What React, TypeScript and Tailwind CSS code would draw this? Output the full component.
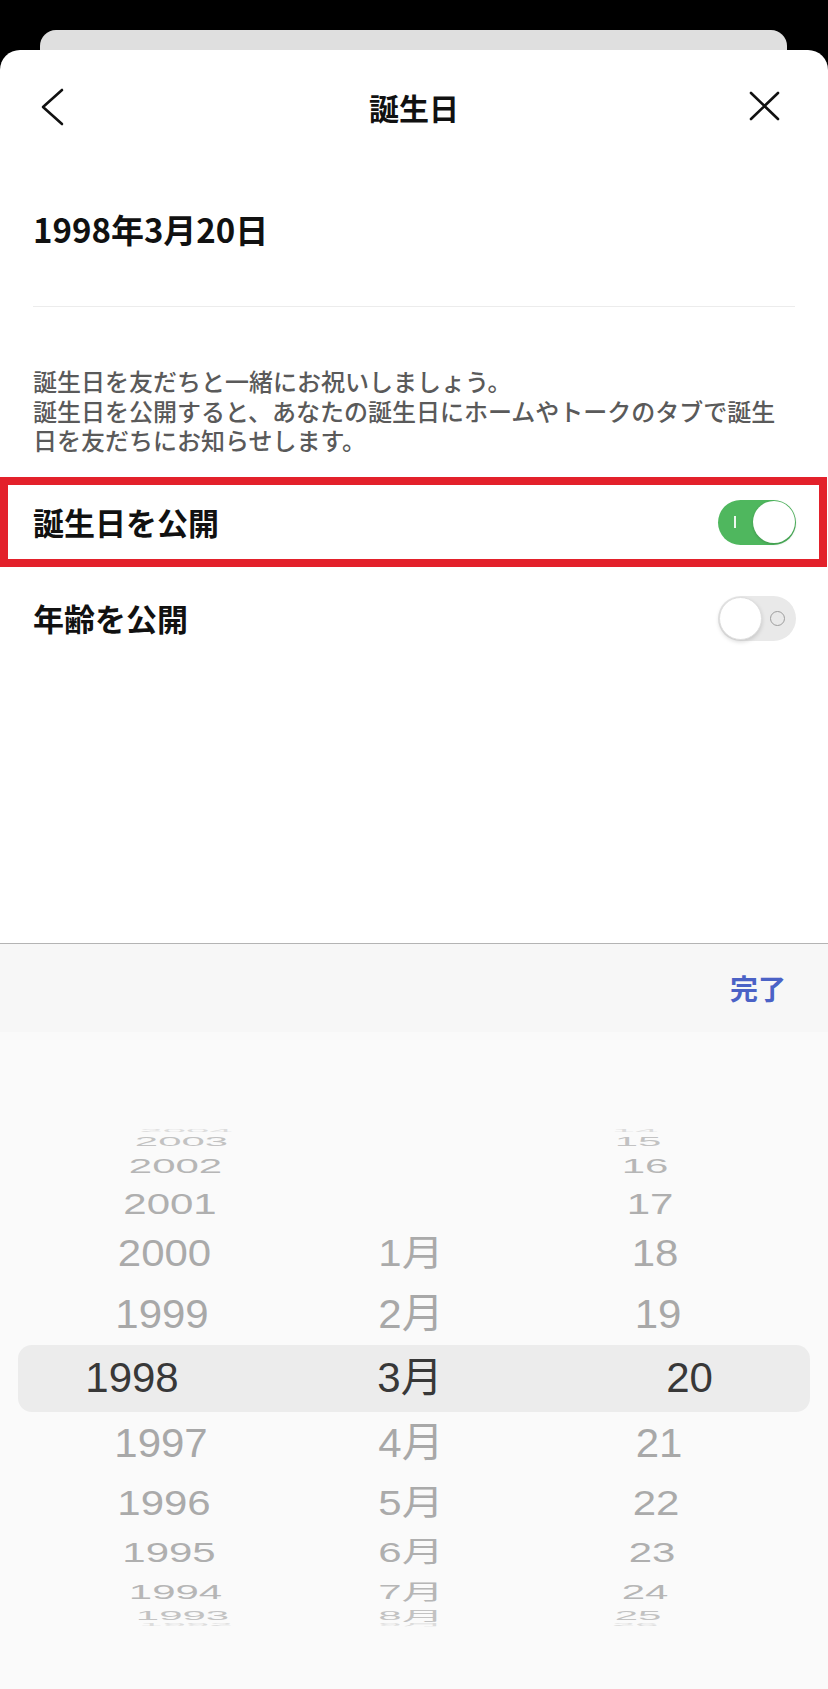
import React from "react";

const jp = "font-['Noto_Sans_CJK_JP',sans-serif]";
const pickerFont = "font-['Liberation_Sans','Noto_Sans_CJK_JP',sans-serif]";

// wheel rows, k = -6..6 (0 is the selected one)
const rows = [
    {k: -6, h: 5, s: 0.08, c: "#dcdcdc", yx: 48, dx: -55},
    {k: -5, h: 16, s: 0.3, c: "#c2c2c2", yx: 43.5, dx: -52},
    {k: -4, h: 32, s: 0.5, c: "#b6b6b6", yx: 37.5, dx: -45},
    {k: -3, h: 44, s: 0.7, c: "#afafaf", yx: 32, dx: -40},
    {k: -2, h: 57, s: 0.87, c: "#aaaaaa", yx: 26.5, dx: -35},
    {k: -1, h: 62, s: 0.97, c: "#a8a8a8", yx: 24, dx: -32},
    {k: 0, h: 67, s: 1, c: "#383838", yx: -15, dx: 8.5},
    {k: 1, h: 62, s: 0.97, c: "#a8a8a8", yx: 23, dx: -31},
    {k: 2, h: 58, s: 0.84, c: "#aaaaaa", yx: 26, dx: -34},
    {k: 3, h: 43, s: 0.67, c: "#afafaf", yx: 31, dx: -38},
    {k: 4, h: 34, s: 0.5, c: "#b6b6b6", yx: 37.5, dx: -45},
    {k: 5, h: 14, s: 0.3, c: "#c2c2c2", yx: 44.5, dx: -52},
    {k: 6, h: 4, s: 0.08, c: "#dcdcdc", yx: 48, dx: -55},
];

function Label({text, dx, s, c}: {text: string; dx: number; s: number; c: string}) {
    return (
        <span
            className="block whitespace-nowrap text-[42px] leading-none"
            style={{transform: `translateX(${dx}px) scaleY(${s})`, color: c}}
        >
            {text}
        </span>
    );
}

function Wheel() {
    return (
        <div className={`h-[657px] bg-[#fafafa] pt-[96.5px] overflow-hidden ${pickerFont}`}>
            {rows.map((r) => {
                const year = String(1998 - r.k);
                const month = r.k >= -2 ? `${3 + r.k}月` : "";
                const day = String(20 + r.k);
                if (r.k === 0) {
                    return (
                        <div key={r.k} className="mx-[18px] flex rounded-[14px] bg-[#ececec]" style={{height: r.h}}>
                            <div className="flex w-[258px] items-center justify-center">
                                <Label text={year} dx={r.yx} s={1} c={r.c}/>
                            </div>
                            <div className="flex w-[276px] items-center justify-center">
                                <Label text={month} dx={-4} s={1} c={r.c}/>
                            </div>
                            <div className="flex w-[258px] items-center justify-center">
                                <Label text={day} dx={r.dx} s={1} c={r.c}/>
                            </div>
                        </div>
                    );
                }
                return (
                    <div key={r.k} className="flex" style={{height: r.h}}>
                        <div className="flex w-[276px] items-center justify-center">
                            <Label text={year} dx={r.yx} s={r.s} c={r.c}/>
                        </div>
                        <div className="flex w-[276px] items-center justify-center">
                            <Label text={month} dx={-3} s={r.s} c={r.c}/>
                        </div>
                        <div className="flex w-[276px] items-center justify-center">
                            <Label text={day} dx={r.dx} s={r.s} c={r.c}/>
                        </div>
                    </div>
                );
            })}
        </div>
    );
}

function SwitchOn() {
    return (
        <div className="flex h-[45px] w-[78px] items-center justify-between rounded-full bg-[#4fb75e] pl-[16px] pr-[1.5px]">
            <span className="h-[12px] w-[1.5px] bg-white/90"/>
            <span className="h-[42px] w-[42px] rounded-full bg-white shadow-[0_1px_3px_rgba(0,0,0,0.2)]"/>
        </div>
    );
}

function SwitchOff() {
    return (
        <div className="flex h-[45px] w-[78px] items-center rounded-full bg-[#e9e9e9] pl-[1px]">
            <span className="h-[43px] w-[43px] rounded-full border border-[#dedede] bg-white shadow-[0_2px_4px_rgba(0,0,0,0.15)]"/>
            <span className="ml-[8px] h-[15px] w-[15px] rounded-full border-[1.5px] border-[#9d9d9d]"/>
        </div>
    );
}

export default function App() {
    return (
        <div className={`flex h-[1689px] w-[828px] flex-col overflow-hidden bg-black ${jp}`}>
            <div className="h-[30px]"/>
            <div className="mx-[40px] h-[20px] w-[747px] rounded-t-[16px] bg-[#dfdfdf]"/>
            <div className="flex flex-1 flex-col rounded-t-[20px] bg-white">
                {/* header */}
                <div className="grid h-[114px] grid-cols-[1fr_auto_1fr] items-center">
                    <div className="pl-[40px]">
                        <svg width="26" height="40" viewBox="0 0 26 40" fill="none">
                            <polyline points="22,3 3,20 22,37" stroke="#111" strokeWidth="2.6" strokeLinecap="round" strokeLinejoin="round"/>
                        </svg>
                    </div>
                    <h1 className="text-[30px] font-bold text-[#111]">誕生日</h1>
                    <div className="flex justify-end pr-[44px]">
                        <svg width="40" height="40" viewBox="0 0 40 40" fill="none">
                            <path d="M7 6 L34 32 M34 6 L7 32" stroke="#111" strokeWidth="2.6" strokeLinecap="round"/>
                        </svg>
                    </div>
                </div>

                {/* value */}
                <div className="mx-[33px] h-[143px] border-b-[1.5px] border-[#ececec] pt-[45px]">
                    <p className="text-[33px] font-semibold leading-[40px] text-[#111]">1998年3月20日</p>
                </div>

                <p className="px-[33px] pb-[19.5px] pt-[59px] text-[24px] font-medium leading-[29.5px] text-[#5a5a5a]">
                    誕生日を友だちと一緒にお祝いしましょう。<br/>
                    誕生日を公開すると、あなたの誕生日にホームやトークのタブで誕生<br/>
                    日を友だちにお知らせします。
                </p>

                <div className="relative flex h-[96px] items-center justify-between pl-[33px] pr-[32px]">
                    <span className="text-[31px] font-bold text-[#111]">誕生日を公開</span>
                    <SwitchOn/>
                    <div className="pointer-events-none absolute bottom-[3px] left-0 right-[1px] top-[3px] border-[8px] border-[#e3212b]"/>
                </div>
                <div className="flex h-[96px] items-center justify-between pl-[33px] pr-[32px]">
                    <span className="text-[31px] font-bold text-[#111]">年齢を公開</span>
                    <SwitchOff/>
                </div>

                <div className="flex-1"/>

                {/* picker toolbar */}
                <div className="flex h-[89px] items-center justify-end border-t border-[#b4b4b4] bg-[#f7f7f7] pr-[42px]">
                    <span className="text-[28px] font-bold text-[#4b62c6]">完了</span>
                </div>
                <Wheel/>
            </div>
        </div>
    );
}
